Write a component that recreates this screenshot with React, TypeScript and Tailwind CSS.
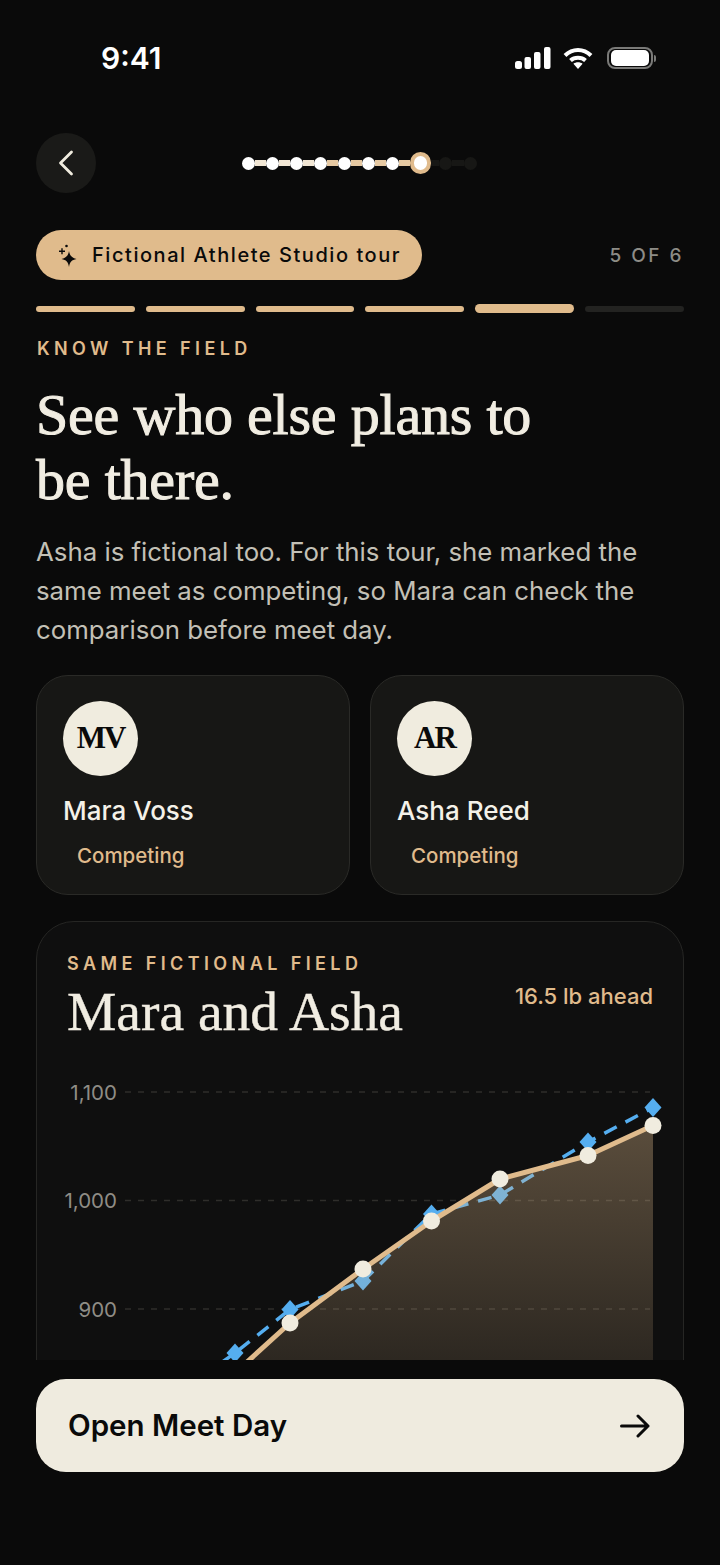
import React from 'react';

const sans = "font-['Inter',sans-serif]";
const serif = "font-['Liberation_Serif',serif]";

const tanPoints: [number, number][] = [
  [235, 1373], [290, 1323], [363, 1269], [431.5, 1221], [500, 1179], [588, 1155.5], [653, 1125.5],
];
const bluePoints: [number, number][] = [
  [180, 1392], [235, 1353], [290, 1309.5], [363, 1281], [431.5, 1214], [500, 1195], [588, 1142], [653, 1107.5],
];
const gridLines = [
  { y: 1092, label: '1,100' },
  { y: 1200.5, label: '1,000' },
  { y: 1309, label: '900' },
];

const toPath = (pts: [number, number][]) => pts.map(([x, y], i) => `${i === 0 ? 'M' : 'L'}${x} ${y}`).join(' ');

const StatusBar: React.FC = () => (
  <div className="flex h-[116px] shrink-0 items-center justify-between pl-[101px] pr-[64px]">
    <span className="text-[30px] font-semibold leading-none text-white">9:41</span>
    <div className="flex items-center">
      <svg width="36" height="22" viewBox="0 0 36 22" fill="#fff">
        <rect x="0" y="14" width="7" height="8" rx="2.5" />
        <rect x="9.5" y="10" width="6.5" height="12" rx="2" />
        <rect x="19" y="5" width="6.5" height="17" rx="2" />
        <rect x="29" y="0" width="6.5" height="22" rx="2" />
      </svg>
      <svg className="ml-[12px]" width="30" height="22" viewBox="0 0 30 22" fill="none" stroke="#fff" strokeWidth="4">
        <path d="M2 8.500C9.500 1 20.500 1 28 8.500" />
        <path d="M7.500 13.500C11.500 9.800 18.500 9.800 22.500 13.500" />
        <path d="M15 22l-4.600-5.200c2.600-2 6.600-2 9.200 0z" fill="#fff" stroke="none" />
      </svg>
      <div className="ml-[14px] flex items-center">
        <div className="flex h-[22px] w-[46px] items-center justify-center rounded-[8px] border-2 border-[#7a7a78]">
          <div className="h-[16px] w-[38px] rounded-[5px] bg-white" />
        </div>
        <div className="ml-[1px] h-[7px] w-[2px] rounded-r-full bg-[#7a7a78]" />
      </div>
    </div>
  </div>
);

const Dot: React.FC<{ dim?: boolean }> = ({ dim }) => (
  <div className={`h-[13px] w-[13px] shrink-0 rounded-full ${dim ? 'bg-[#171715]' : 'bg-white'}`} />
);

const Stepper: React.FC = () => (
  <div className="flex items-center">
    {[0, 1, 2, 3, 4, 5, 6].map((i) => (
      <React.Fragment key={i}>
        <Dot />
        <div className={`h-[6px] w-[11px] ${i < 3 ? 'bg-[#f1e6d4]' : 'bg-[#e6c9a2]'}`} />
      </React.Fragment>
    ))}
    <div className="h-[22px] w-[21px] shrink-0 rounded-full border-[4px] border-[#e0bb8c] bg-white" />
    <div className="h-[6px] w-[8px] bg-[#171715]" />
    <Dot dim />
    <div className="h-[6px] w-[12px] bg-[#171715]" />
    <Dot dim />
  </div>
);

const AthleteCard: React.FC<{ initials: string; name: string }> = ({ initials, name }) => (
  <div className="h-[220px] rounded-[32px] border border-[#2a2a27] bg-[#171715] pl-[26px] pt-[25px]">
    <div className={`flex h-[75px] w-[75px] items-center justify-center rounded-full bg-[#f0ecdf] text-[31px] font-bold tracking-[-2px] text-[#0a0a0a] ${serif}`}>
      {initials}
    </div>
    <div className="mt-[19px] text-[26px] font-medium leading-[32px] text-[#f4f1e8]">{name}</div>
    <div className="mt-[16px] pl-[14px] text-[20.5px] font-medium leading-[26px] text-[#e0bb8c]">Competing</div>
  </div>
);

const Chart: React.FC = () => (
  <svg className="mt-[33px] block overflow-visible" width="588" height="300" viewBox="67 1075 588 300" fill="none">
    <defs>
      <linearGradient id="area" gradientUnits="userSpaceOnUse" x1="0" y1="1125" x2="0" y2="1375">
        <stop offset="0" stopColor="#e0bb8c" stopOpacity="0.36" />
        <stop offset="1" stopColor="#e0bb8c" stopOpacity="0.13" />
      </linearGradient>
    </defs>
    {gridLines.map((g) => (
      <g key={g.y}>
        <line x1="125" x2="650" y1={g.y} y2={g.y} stroke="#2f2e2b" strokeWidth="1.500" strokeDasharray="6 7" />
        <text x="117" y={g.y + 7.500} textAnchor="end" fontSize="20.500" fill="#8f8d86" fontFamily="Inter, sans-serif">
          {g.label}
        </text>
      </g>
    ))}
    <path d={toPath(bluePoints)} stroke="#55aef0" strokeWidth="3.500" strokeDasharray="14 10" />
    {bluePoints.map(([x, y]) => (
      <path key={x} d={`M${x} ${y - 9.500}L${x + 8.500} ${y}L${x} ${y + 9.500}L${x - 8.500} ${y}Z`} fill="#55aef0" />
    ))}
    <path d={`${toPath(tanPoints)} L653 1400 L235 1400 Z`} fill="url(#area)" />
    <path d={toPath(tanPoints)} stroke="#e0bb8c" strokeWidth="5" strokeLinejoin="round" />
    {tanPoints.map(([x, y]) => (
      <circle key={x} cx={x} cy={y} r="8.500" fill="#f0ecdf" />
    ))}
  </svg>
);

const App: React.FC = () => {
  return (
    <div className={`flex h-[1565px] w-[720px] flex-col overflow-hidden bg-[#0a0a0a] ${sans}`}>
      <StatusBar />

      <div className="mt-[17px] flex h-[60px] shrink-0 items-center pl-[36px]">
        <button className="flex h-[60px] w-[60px] items-center justify-center rounded-full bg-[#1a1a18]">
          <svg width="16" height="26" viewBox="0 0 16 26" fill="none" stroke="#f0ecdf" strokeWidth="2.800" strokeLinecap="round" strokeLinejoin="round">
            <path d="M13.500 2L2.500 13L13.500 24" />
          </svg>
        </button>
        <div className="ml-[146px]">
          <Stepper />
        </div>
      </div>

      <div className="h-[1167px] shrink-0 overflow-hidden px-[36px]">
        <div className="mt-[37px] flex items-center justify-between">
          <div className="flex h-[50px] w-[386px] items-center rounded-full bg-[#e0bb8c] pl-[20px] text-[#0a0a0a]">
            <svg width="24" height="26" viewBox="0 0 24 26" fill="#0a0a0a">
              <path d="M13 9c.8 4.700 2.600 6.600 7.500 8-4.900.9-6.700 2.800-7.500 8-.8-5.200-2.600-7.100-7.500-8 4.900-1.400 6.700-3.300 7.500-8z" />
              <path d="M5.300 6.200h1.400v2.300H9v1.400H6.700v2.300H5.300V9.900H3V8.500h2.300z" />
              <circle cx="10.500" cy="4" r="1.300" />
            </svg>
            <span className="ml-[12px] whitespace-nowrap text-[20px] font-medium leading-none tracking-[1.55px]">Fictional Athlete Studio tour</span>
          </div>
          <span className="text-[19px] font-medium leading-none tracking-[2.5px] text-[#8d8c86]">5 OF 6</span>
        </div>

        <div className="mt-[24px] flex h-[9px] items-center gap-[11px]">
          {[0, 1, 2, 3].map((i) => (
            <div key={i} className="h-[6px] flex-1 rounded-full bg-[#e0bb8c]" />
          ))}
          <div className="h-[9px] flex-1 rounded-full bg-[#e0bb8c]" />
          <div className="h-[6px] flex-1 rounded-full bg-[#232321]" />
        </div>

        <div className="ml-[1px] mt-[25px] text-[18px] font-semibold leading-[22px] tracking-[4.4px] text-[#e0bb8c]">KNOW THE FIELD</div>

        <h1 className={`mt-[22px] w-[600px] text-[58px] font-normal leading-[65px] tracking-[-0.2px] text-[#f1ede2] [-webkit-text-stroke:1px_#f1ede2] ${serif}`}>
          See who else plans to<br />be there.
        </h1>

        <p className="mt-[20px] text-[25.8px] font-normal leading-[39px] text-[#c3c0b6]">
          Asha is fictional too. For this tour, she marked the<br />
          same meet as competing, so Mara can check the<br />
          comparison before meet day.
        </p>

        <div className="mt-[26px] grid grid-cols-2 gap-[20px]">
          <AthleteCard initials="MV" name="Mara Voss" />
          <AthleteCard initials="AR" name="Asha Reed" />
        </div>

        <div className="mt-[26px] h-[520px] rounded-[38px] border border-[#262624] bg-[#0f0f0f] px-[30px] pt-[31px]">
          <div className="flex items-start justify-between">
            <div>
              <div className="text-[18px] font-semibold leading-[22px] tracking-[4.4px] text-[#e0bb8c]">SAME FICTIONAL FIELD</div>
              <div className={`mt-[7px] text-[55.5px] leading-[60px] text-[#f1ede2] [-webkit-text-stroke:0.4px_#f1ede2] ${serif}`}>Mara and Asha</div>
            </div>
            <div className="mt-[29px] text-[22px] font-medium leading-[28px] text-[#e0bb8c]">16.5 lb ahead</div>
          </div>
          <Chart />
        </div>
      </div>

      <div className="px-[36px] pt-[19px]">
        <button className="flex h-[93px] w-full items-center justify-between rounded-[30px] bg-[#efebdf] pl-[32px] pr-[34px]">
          <span className="text-[29.5px] font-semibold leading-none text-[#0a0a0a]">Open Meet Day</span>
          <svg width="30" height="24" viewBox="0 0 30 24" fill="none" stroke="#0a0a0a" strokeWidth="3" strokeLinecap="round" strokeLinejoin="round">
            <path d="M1.500 12H28M18 2l10 10-10 10" />
          </svg>
        </button>
      </div>
    </div>
  );
};

export default App;
